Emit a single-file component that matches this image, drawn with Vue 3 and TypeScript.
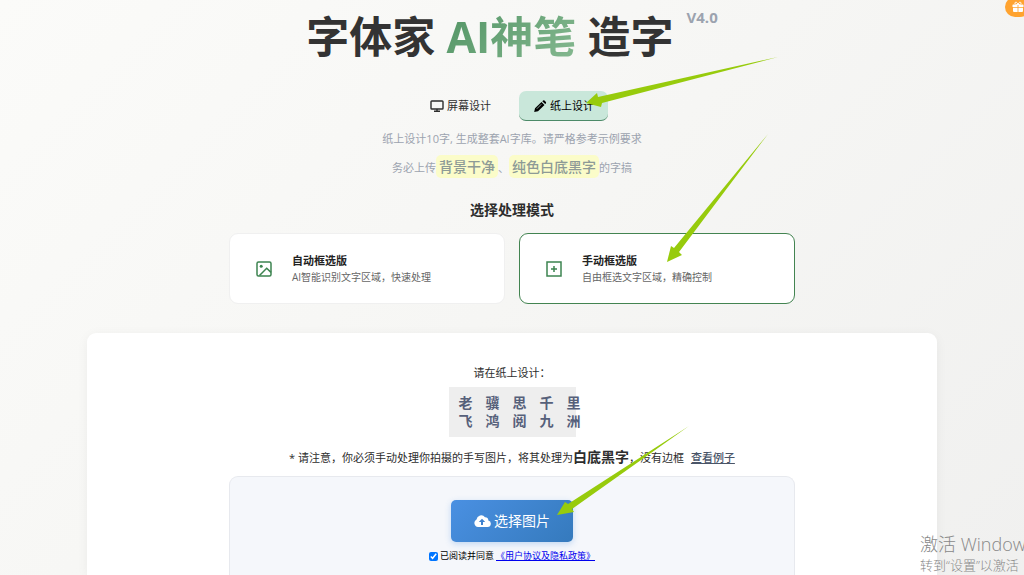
<script setup lang="ts">
import { ref } from 'vue'

type Design = 'screen' | 'paper'
type Mode = 'auto' | 'manual'

const design = ref<Design>('paper')
const mode = ref<Mode>('manual')
const agreed = ref(true)
const characters: string[] = [...'老骥思千里飞鸿阅九洲']
const arrows: string[] = [
  '586,103 597,93 598,97 778,57 602,103 601,107',
  '667,262 671,246 674,248 768,134 679,252 682,255',
  '557,515 565,502 568,504 689,426 572,509 574,512',
]
</script>

<template>
  <main class="page">
    <header class="hero">
      <h1 class="title">字体家 <span class="accent">AI神笔</span> 造字</h1>
      <span class="version">V4.0</span>
    </header>

    <nav class="tabs" aria-label="设计方式">
      <button type="button" class="tab" :class="{ active: design === 'screen' }" @click="design = 'screen'">
        <svg class="tab-icon" viewBox="0 0 14 12" fill="none" stroke="currentColor" stroke-width="1.4" aria-hidden="true">
          <rect x="1" y="1" width="12" height="8" rx="0.8" />
          <path d="M7 9v2M4 11.2h6" />
        </svg>屏幕设计
      </button>
      <button type="button" class="tab" :class="{ active: design === 'paper' }" @click="design = 'paper'">
        <svg class="tab-icon" viewBox="0 0 14 12" fill="currentColor" aria-hidden="true">
          <path d="M8.5 2 11.5 5 5 11.3 1.2 12 2 8.3zM9.3 1.2 10.1.5Q10.8 0 11.5.6L12.9 2Q13.4 2.7 12.8 3.4L12.2 4.1z" />
          <path d="M3.8 8.8 8.3 4.3" stroke="#c9e7da" stroke-width="0.7" />
        </svg>纸上设计
      </button>
    </nav>

    <p class="hint">纸上设计10字, 生成整套AI字库。请严格参考示例要求</p>
    <p class="hint second">务必上传<strong class="mark">背景干净</strong>、<strong class="mark">纯色白底黑字</strong>的字搞</p>

    <h2 class="subtitle">选择处理模式</h2>
    <div class="modes">
      <button type="button" class="mode" :class="{ selected: mode === 'auto' }" @click="mode = 'auto'">
        <svg class="mode-icon" viewBox="0 0 16 16" fill="none" stroke="#3d8450" stroke-width="1.5" aria-hidden="true">
          <rect x="1" y="1" width="14" height="14" rx="1.5" />
          <circle cx="5.2" cy="5.2" r="1.5" fill="#3d8450" stroke="none" />
          <path d="M3.5 14.5 10.7 7.2 15 11.4" />
        </svg>
        <span class="mode-text"><b>自动框选版</b><span>AI智能识别文字区域，快速处理</span></span>
      </button>
      <button type="button" class="mode" :class="{ selected: mode === 'manual' }" @click="mode = 'manual'">
        <svg class="mode-icon" viewBox="0 0 16 16" fill="none" stroke="#3d8450" stroke-width="1.5" aria-hidden="true">
          <rect x="1" y="1" width="14" height="14" />
          <path d="M8 5v6M5 8h6" />
        </svg>
        <span class="mode-text"><b>手动框选版</b><span>自由框选文字区域，精确控制</span></span>
      </button>
    </div>

    <section class="panel">
      <p class="prompt">请在纸上设计：</p>
      <div class="characters">
        <span v-for="character in characters" :key="character">{{ character }}</span>
      </div>
      <p class="note">* 请注意，你必须手动处理你拍摄的手写图片，将其处理为<strong>白底黑字</strong>，没有边框 <a href="#example">查看例子</a></p>

      <div class="upload">
        <button type="button" class="choose">
          <svg class="cloud" viewBox="0 0 17 12" aria-hidden="true">
            <path fill="#fff" d="M4 12A4 4 0 0 1 2.5 4.5 4.8 4.8 0 0 1 11 2.2 3 3 0 0 1 14.3 5.5 3.3 3.3 0 0 1 13.7 12z" />
            <path fill="#3f82cf" d="M8 3.8 11.2 7H9v3H7V7H4.8z" />
          </svg>选择图片
        </button>
        <div class="agreement">
          <input id="agree" v-model="agreed" type="checkbox" />
          <label for="agree">已阅读并同意</label>
          <a href="#terms">《用户协议及隐私政策》</a>
        </div>
      </div>
    </section>

    <button type="button" class="gift" aria-label="礼物">
      <svg viewBox="0 0 12 12" fill="#fff" aria-hidden="true">
        <path d="M1 3.5h4.6V6H.5V4zM6.4 3.5H11l.5.5v2H6.4zM1 6.7h4.6V11H1.7L1 10.3zM6.4 6.7H11v3.6l-.7.7H6.4z" />
        <path d="M6 3.4C3.5 3.8 2.6 2.8 3 1.8S5.2 1 6 3.4C6.8 1 8.6.8 9 1.8S8.5 3.8 6 3.4z" fill="none" stroke="#fff" />
      </svg>
    </button>

    <svg class="arrows" viewBox="0 0 1024 575" aria-hidden="true">
      <polygon v-for="points in arrows" :key="points" :points="points" />
    </svg>

    <aside class="activation">
      <div class="activation-title">激活 Window</div>
      <div>转到“设置”以激活</div>
    </aside>
  </main>
</template>

<style>
html,
body {
  overflow: hidden;
}
</style>

<style scoped>
* {
  box-sizing: border-box;
}

.page {
  position: relative;
  display: flex;
  flex-direction: column;
  align-items: center;
  height: 100vh;
  overflow: hidden;
  background: linear-gradient(135deg, #fbfbf9 0%, #f6f6f4 50%, #f0f0ef 100%);
  color: #2d2d2d;
  font-family: "Open Sans", "Noto Sans CJK SC", sans-serif;
  font-size: 11px;
  line-height: 20px;
}

button {
  font: inherit;
  color: inherit;
  cursor: pointer;
}

p,
h1,
h2 {
  margin: 0;
}

.hero {
  display: flex;
  gap: 13px;
  padding-top: 7px;
  white-space: nowrap;
}

.title {
  font-size: 43px;
  line-height: 60px;
  font-weight: 700;
  color: #333;
}

.accent {
  color: transparent;
  background: linear-gradient(135deg, #529464, #86b991);
  background-clip: text;
}

.version {
  font-size: 15px;
  font-weight: 700;
  color: #9ca3af;
}

.tabs {
  display: flex;
  gap: 14px;
  margin-top: 24px;
}

.tab {
  display: flex;
  align-items: center;
  gap: 3px;
  height: 30px;
  padding: 0 14px;
  border: 0;
  border-bottom: 1px solid transparent;
  border-radius: 7px;
  background: none;
}

.tab.active {
  border-bottom-color: #4c8a68;
  background: #c9e7da;
  color: #000;
}

.tab-icon {
  width: 14px;
  height: 12px;
}

.hint {
  margin-top: 8px;
  color: #9ca3af;
}

.hint.second {
  margin-top: 6px;
  line-height: 24px;
}

.mark {
  padding: 2px 3px;
  border-radius: 5px;
  background: #fbfcc9;
  font-size: 14px;
  font-weight: 500;
  color: #8d9a96;
}

.subtitle {
  margin-top: 20px;
  font-size: 14px;
  line-height: 20px;
  font-weight: 700;
}

.modes {
  display: grid;
  grid-template-columns: 1fr 1fr;
  gap: 14px;
  width: min(566px, 100%);
  margin-top: 13px;
}

.mode {
  display: flex;
  align-items: center;
  gap: 20px;
  height: 71px;
  padding: 0 26px;
  border: 1px solid #f0f0f0;
  border-radius: 9px;
  background: #fff;
  text-align: left;
}

.mode.selected {
  border-color: #438451;
}

.mode-icon {
  width: 16px;
  height: 16px;
}

.mode-text {
  display: grid;
  font-size: 10px;
  line-height: 17px;
  color: #666;
}

.mode-text b {
  font-size: 11px;
  font-weight: 700;
  color: #222;
}

.panel {
  flex: 1;
  display: flex;
  flex-direction: column;
  align-items: center;
  width: 83%;
  margin-top: 29px;
  padding-top: 30px;
  border-radius: 9px 9px 0 0;
  background: #fff;
  box-shadow: 0 2px 12px #0000000d;
}

.characters {
  display: grid;
  grid-template-columns: repeat(5, 27px);
  width: 127px;
  margin-top: 4px;
  padding: 7px 10px;
  background: #eee;
  font-size: 14px;
  line-height: 18px;
  font-weight: 700;
  color: #56607a;
}

.note {
  margin-top: 10px;
  white-space: nowrap;
}

.note strong {
  font-size: 14px;
  font-weight: 700;
}

.note a {
  margin-left: 4px;
  font-weight: 500;
  color: #4a5568;
}

.upload {
  flex: 1;
  display: flex;
  flex-direction: column;
  align-items: center;
  width: min(566px, 100%);
  margin-top: 8px;
  padding-top: 23px;
  border: 1px solid #e7e9ee;
  border-bottom: 0;
  border-radius: 9px 9px 0 0;
  background: #f5f7fb;
}

.choose {
  display: flex;
  align-items: center;
  gap: 3px;
  height: 42px;
  padding: 0 23px;
  border: 0;
  border-radius: 5px;
  background: linear-gradient(135deg, #4a90e2, #357abd);
  box-shadow: 0 2px 6px #4a90e24d;
  font-size: 14px;
  color: #fff;
}

.cloud {
  width: 17px;
  height: 12px;
}

.agreement {
  display: flex;
  align-items: center;
  gap: 2px;
  margin-top: 4px;
  font-size: 9px;
  color: #000;
}

.agreement input {
  width: 9px;
  height: 9px;
  margin: 0;
}

.agreement a {
  color: #0000ee;
}

.gift {
  position: absolute;
  top: -3px;
  right: -6px;
  display: grid;
  place-items: center;
  width: 25px;
  height: 20px;
  padding: 0;
  border: 0;
  border-radius: 10px;
  background: #ffa32f;
}

.gift svg {
  width: 12px;
  height: 12px;
}

.arrows {
  position: absolute;
  top: 0;
  left: 0;
  width: 100%;
  fill: #97cb0c;
  pointer-events: none;
}

.activation {
  position: absolute;
  right: 0;
  bottom: 0;
  width: 104px;
  font-size: 13px;
  line-height: 20px;
  font-weight: 300;
  color: #888;
  white-space: nowrap;
}

.activation-title {
  font-size: 18px;
  line-height: 22px;
}
</style>
